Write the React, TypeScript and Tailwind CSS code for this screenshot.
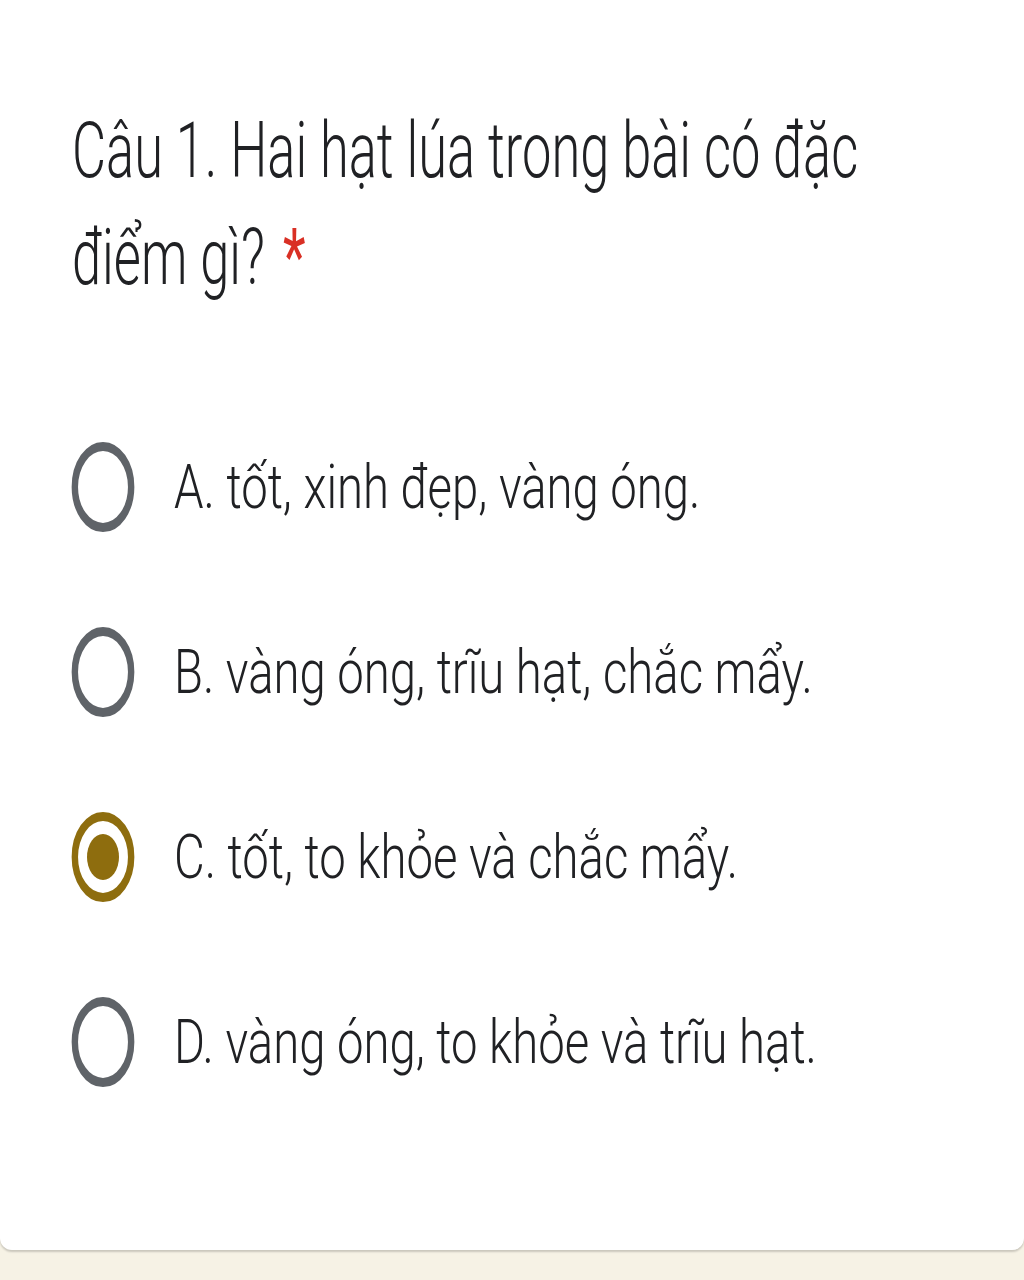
import React from "react";

const OPTIONS = [
  "A. tốt, xinh đẹp, vàng óng.",
  "B. vàng óng, trĩu hạt, chắc mẩy.",
  "C. tốt, to khỏe và chắc mẩy.",
  "D. vàng óng, to khỏe và trĩu hạt.",
];

const SELECTED = 2;

function Radio({ checked }: { checked: boolean }) {
  const color = checked ? "#8e6d0e" : "#5f6368";
  return (
    <svg
      width="64"
      height="92"
      viewBox="0 0 40 40"
      preserveAspectRatio="none"
      className="shrink-0"
    >
      <circle cx="20" cy="20" r="17.6" fill="none" stroke={color} strokeWidth="4" />
      {checked && <circle cx="20" cy="20" r="10" fill={color} />}
    </svg>
  );
}

export default function App() {
  return (
    <div
      className="min-h-[1280px] w-[1024px] overflow-hidden bg-[#f6f2e5]"
      style={{ fontFamily: "Roboto, 'Noto Sans', sans-serif" }}
    >
      <div className="h-[1250px] rounded-b-[12px] bg-white shadow-[0_2px_2px_rgba(0,0,0,0.18)]">
        <div className="pl-[72px] pt-[98px]">
          <h1 className="origin-left scale-x-[0.681] whitespace-nowrap text-[77px] font-light leading-[107px] text-[#202124]">
            Câu 1. Hai hạt lúa trong bài có đặc
            <br />
            điểm gì? <span className="ml-[8px] font-normal text-[#d93025]">*</span>
          </h1>
        </div>

        <div className="mt-[129px] flex flex-col gap-[93px] pl-[71px]">
          {OPTIONS.map((opt, i) => (
            <div key={opt} className="flex items-center gap-[39px]">
              <Radio checked={i === SELECTED} />
              <span className="origin-left scale-x-[0.775] whitespace-nowrap text-[61px] font-light leading-[80px] text-[#202124]">
                {opt}
              </span>
            </div>
          ))}
        </div>
      </div>
    </div>
  );
}
